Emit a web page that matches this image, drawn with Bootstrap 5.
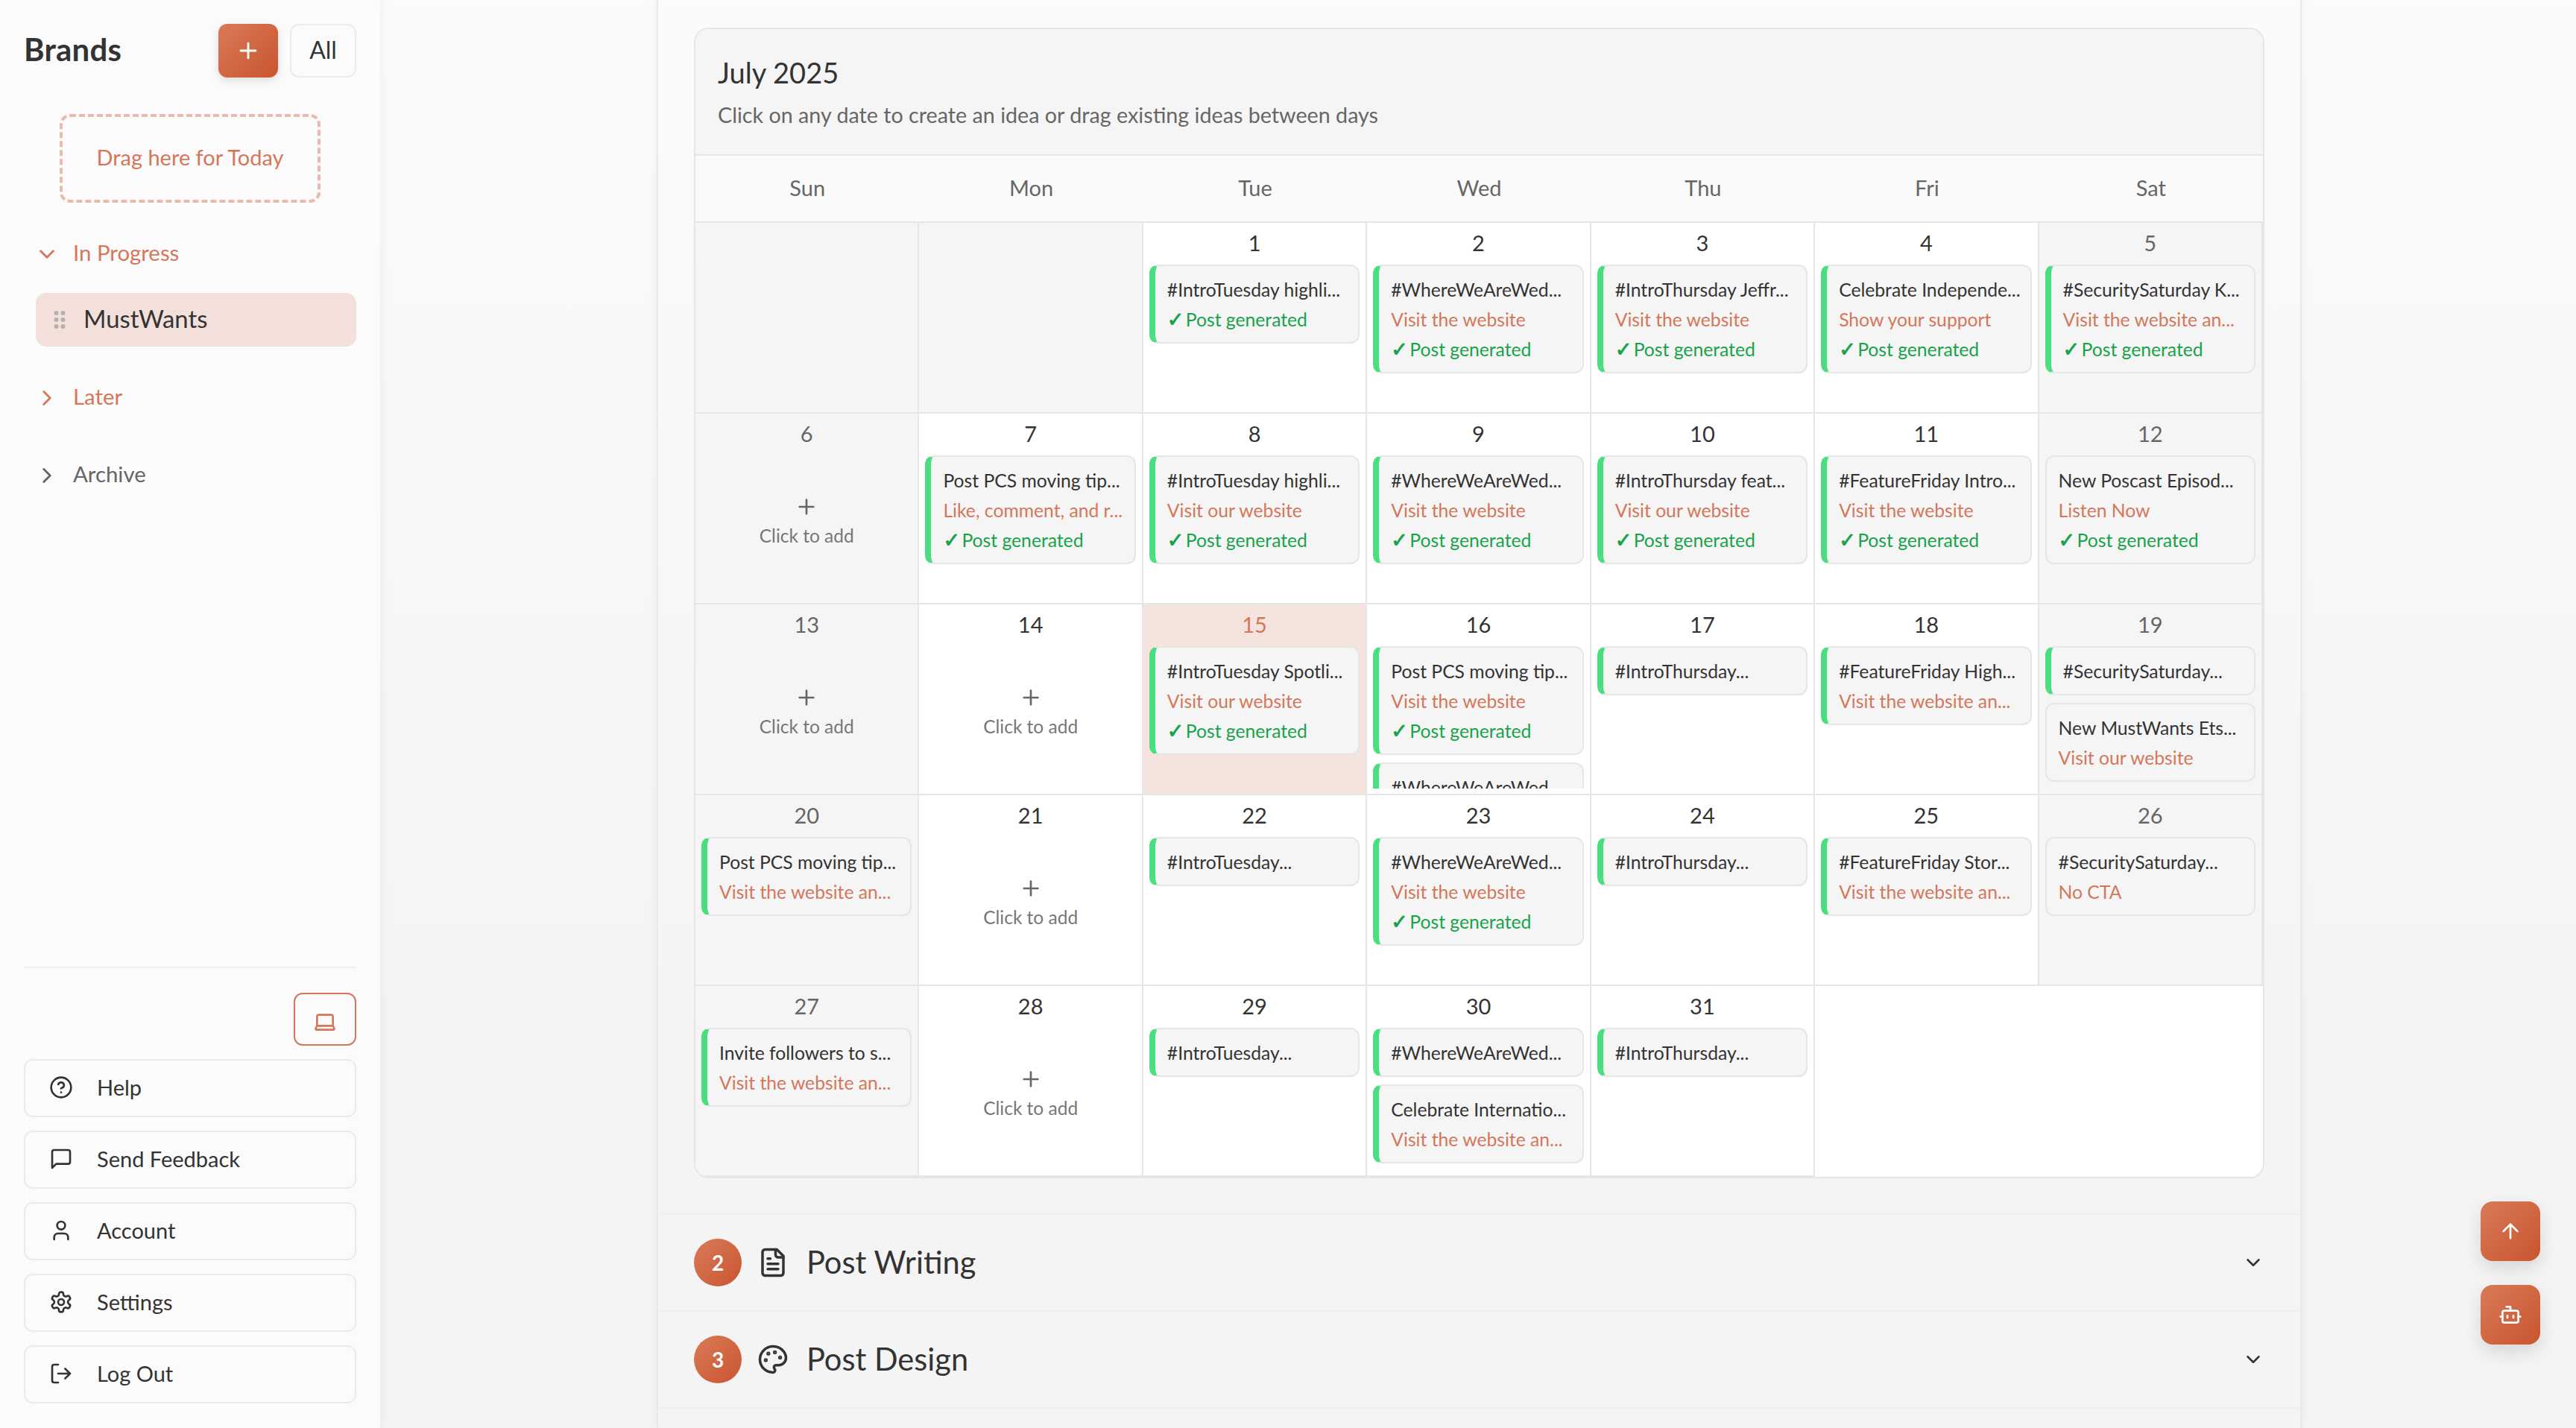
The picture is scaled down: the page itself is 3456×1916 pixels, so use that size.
<!DOCTYPE html>
<html lang="en"><head><meta charset="utf-8"><title>Calendar</title>
<link href="https://cdn.jsdelivr.net/npm/bootstrap@5.3.0/dist/css/bootstrap.min.css" rel="stylesheet">
<style>
:root{--terra:#d4775a;--line:#e6e6e6;--ink:#333}
html,body{height:100%}
body{font-family:"Lato","Liberation Sans",sans-serif;color:var(--ink);background:linear-gradient(180deg,#fbfbfb 0,#f4f4f4 75%);overflow:hidden;font-size:28px}
svg.ico{fill:none;stroke:currentColor;stroke-width:2;stroke-linecap:round;stroke-linejoin:round;flex:none}
.side-col{width:510px;flex:none;background:#fbfbfb;box-shadow:2px 0 14px rgba(0,0,0,.05);padding:32px 32px 33px;z-index:2}
.side-title{font-size:42px;font-weight:700;line-height:68px;letter-spacing:.2px;margin:0;padding-bottom:4px}
.grad-btn{background:linear-gradient(135deg,#d97a58,#c9552f);color:#fff;border:0;display:flex;align-items:center;justify-content:center;padding:0}
.add-brand{width:80px;height:72px;border-radius:12px;box-shadow:0 4px 12px rgba(0,0,0,.12)}
.all-btn{width:89px;height:72px;border:2px solid #ebebeb;border-radius:12px;font-size:32px;color:var(--ink);padding:0 0 3px;background:transparent}
.drop-zone{width:350px;height:119px;margin:49px 0 0 48px;border:4px dashed #e8bcaa;border-radius:14px;color:var(--terra);font-size:29px;padding-bottom:3px}
.grp-row{height:44px;color:var(--terra);font-size:29.4px;gap:22px;padding:0 0 4px 22px;margin-top:47px}
.grp-row svg{width:34px;height:34px;margin-left:-8px;margin-right:-4px;position:relative;top:2px}
.grp-gray{color:#666}
.brand-row{height:72px;margin:30px 0 0 16px;background:#f4e0da;border-radius:14px;font-size:32.8px;padding:0 0 3px 24px;gap:24px}
.brand-row svg{position:relative;top:1px}
.grp-later{margin-top:47px}
.grp-arch{margin-top:60px}
.side-rule{border-top:2px solid #f0f0f0;margin-bottom:33px}
.lap-btn{width:84px;height:71px;border:2px solid var(--terra);border-radius:12px;color:var(--terra);background:transparent;padding:0}
.menu-list{gap:18px;margin-top:18px}
.menu-item{height:78px;border:2px solid #ebebeb;border-radius:12px;padding:0 0 2px 32px;gap:32px;font-size:29px;color:var(--ink);background:transparent}
.main-col{min-width:0}
.panel-box{width:2207px;height:100%;margin-left:371px;border-left:2px solid #e9e9e9;border-right:2px solid #e9e9e9;box-shadow:0 0 14px rgba(0,0,0,.05);padding-top:37px}
.cal-box{width:2107px;margin:0 0 47px 48px;border:2px solid var(--line);border-radius:20px;overflow:hidden;background:#fff}
.cal-head{height:170px;background:#f5f5f5;border-bottom:2px solid var(--line);padding:30px 30px}
.cal-title{font-size:38px;font-weight:400;line-height:56px;margin:0}
.cal-sub{font-size:28.7px;color:#666;line-height:40px;margin:9px 0 0}
.cal-grid{display:grid;grid-template-columns:repeat(7,1fr)}
.dow{height:90px;background:#fafafa;border-bottom:2px solid var(--line);color:#666;font-size:29px;display:flex;align-items:center;justify-content:center;padding-bottom:2px}
.day{height:256px;overflow:hidden;border-right:2px solid var(--line);border-bottom:2px solid var(--line);padding:5px 8px 0;background:#fff}
.day-blank{grid-column:span 2;border:0}
.off{background:#f5f5f5}
.today{background:#f5e4de}
.today .day-num{color:var(--terra)}
.day-num{font-size:29px;line-height:44px;text-align:center;margin-bottom:7px}
.off .day-num{color:#666}
.day-body{height:191px;overflow:hidden}
.idea{border:2px solid var(--line);border-radius:12px;background:#f5f5f5;padding:12px 16px 10px;font-size:24.7px;line-height:40px;white-space:nowrap;overflow:hidden;margin-bottom:10px}
.idea.live{border-left:8px solid #4ade80}
.cta{color:var(--terra)}
.gen{color:#16a34a}
.tick{display:inline-block;width:25px;font-family:"DejaVu Sans",sans-serif;font-size:27px;line-height:1;-webkit-text-stroke:.9px #16a34a}
.add-slot{color:#777;font-size:24.5px;line-height:40px;padding-top:53px}
.add-slot svg{width:32px;height:32px;color:#666;margin-bottom:3px}
.step-row{height:130px;border-top:2px solid #efefef;padding:0 48px;gap:24px}
.step-num{width:64px;height:64px;border-radius:50%;font-size:28px;font-weight:700}
.step-title{font-size:41.6px;margin-left:3px;padding-bottom:1px}
.step-row .ico-big{width:42px;height:42px;margin:0 -3px}
.float-stack{position:fixed;right:48px;bottom:112px;gap:32px;z-index:3}
.fab{width:80px;height:80px;border-radius:16px;box-shadow:0 10px 24px rgba(0,0,0,.12)}
</style></head>
<body>
<div class="d-flex h-100">
<aside class="side-col d-flex flex-column">
  <div class="d-flex align-items-center">
    <h2 class="side-title flex-grow-1">Brands</h2>
    <button class="grad-btn add-brand" aria-label="Add"><svg class="ico" width="34" height="34" viewBox="0 0 24 24"><path d="M5 12h14M12 5v14"/></svg></button>
    <button class="all-btn ms-3">All</button>
  </div>
  <div class="drop-zone d-flex align-items-center justify-content-center">Drag here for Today</div>
  <div class="grp-row d-flex align-items-center"><svg class="ico" viewBox="0 0 24 24"><path d="m6 9 6 6 6-6"/></svg>In Progress</div>
  <div class="brand-row d-flex align-items-center"><svg width="16" height="26" viewBox="0 0 16 26" fill="#b5b0ae"><circle cx="3.5" cy="4" r="3"/><circle cx="12.5" cy="4" r="3"/><circle cx="3.5" cy="13" r="3"/><circle cx="12.5" cy="13" r="3"/><circle cx="3.5" cy="22" r="3"/><circle cx="12.5" cy="22" r="3"/></svg>MustWants</div>
  <div class="grp-row grp-later d-flex align-items-center"><svg class="ico" viewBox="0 0 24 24"><path d="m9 18 6-6-6-6"/></svg>Later</div>
  <div class="grp-row grp-gray grp-arch d-flex align-items-center"><svg class="ico" viewBox="0 0 24 24"><path d="m9 18 6-6-6-6"/></svg>Archive</div>
  <div class="mt-auto">
    <div class="side-rule"></div>
    <div class="d-flex justify-content-end"><button class="lap-btn" aria-label="Laptop"><svg class="ico" width="32" height="32" viewBox="0 0 24 24"><path d="M20 16V7a2 2 0 0 0-2-2H6a2 2 0 0 0-2 2v9m16 0H4m16 0 1.28 2.55a1 1 0 0 1-.9 1.45H3.62a1 1 0 0 1-.9-1.45L4 16"/></svg></button></div>
    <div class="menu-list d-flex flex-column">
      <div class="menu-item d-flex align-items-center"><svg class="ico" width="32" height="32" viewBox="0 0 24 24"><circle cx="12" cy="12" r="10"/><path d="M9.09 9a3 3 0 0 1 5.83 1c0 2-3 3-3 3M12 17h.01"/></svg>Help</div>
      <div class="menu-item d-flex align-items-center"><svg class="ico" width="32" height="32" viewBox="0 0 24 24"><path d="M21 15a2 2 0 0 1-2 2H7l-4 4V5a2 2 0 0 1 2-2h14a2 2 0 0 1 2 2z"/></svg>Send Feedback</div>
      <div class="menu-item d-flex align-items-center"><svg class="ico" width="32" height="32" viewBox="0 0 24 24"><path d="M19 21v-2a4 4 0 0 0-4-4H9a4 4 0 0 0-4 4v2"/><circle cx="12" cy="7" r="4"/></svg>Account</div>
      <div class="menu-item d-flex align-items-center"><svg class="ico" width="32" height="32" viewBox="0 0 24 24"><path d="M12.22 2h-.44a2 2 0 0 0-2 2v.18a2 2 0 0 1-1 1.73l-.43.25a2 2 0 0 1-2 0l-.15-.08a2 2 0 0 0-2.73.73l-.22.38a2 2 0 0 0 .73 2.73l.15.1a2 2 0 0 1 1 1.72v.51a2 2 0 0 1-1 1.74l-.15.09a2 2 0 0 0-.73 2.73l.22.38a2 2 0 0 0 2.73.73l.15-.08a2 2 0 0 1 2 0l.43.25a2 2 0 0 1 1 1.73V20a2 2 0 0 0 2 2h.44a2 2 0 0 0 2-2v-.18a2 2 0 0 1 1-1.73l.43-.25a2 2 0 0 1 2 0l.15.08a2 2 0 0 0 2.73-.73l.22-.39a2 2 0 0 0-.73-2.73l-.15-.08a2 2 0 0 1-1-1.74v-.5a2 2 0 0 1 1-1.74l.15-.09a2 2 0 0 0 .73-2.73l-.22-.38a2 2 0 0 0-2.73-.73l-.15.08a2 2 0 0 1-2 0l-.43-.25a2 2 0 0 1-1-1.73V4a2 2 0 0 0-2-2z"/><circle cx="12" cy="12" r="3"/></svg>Settings</div>
      <div class="menu-item d-flex align-items-center"><svg class="ico" width="32" height="32" viewBox="0 0 24 24"><path d="M9 21H5a2 2 0 0 1-2-2V5a2 2 0 0 1 2-2h4M16 17l5-5-5-5M21 12H9"/></svg>Log Out</div>
    </div>
  </div>
</aside>
<main class="main-col flex-grow-1">
<div class="panel-box">
  <section class="cal-box">
    <header class="cal-head"><h3 class="cal-title">July 2025</h3><p class="cal-sub">Click on any date to create an idea or drag existing ideas between days</p></header>
    <div class="cal-grid">
      <div class="dow">Sun</div><div class="dow">Mon</div><div class="dow">Tue</div><div class="dow">Wed</div><div class="dow">Thu</div><div class="dow">Fri</div><div class="dow">Sat</div>
    </div>
    <div class="cal-grid">
      <div class="day off"></div>
      <div class="day off"></div>
      <div class="day"><div class="day-num">1</div><div class="day-body"><div class="idea live">#IntroTuesday highli...<br><span class="gen"><span class="tick">✓</span>Post generated</span></div></div></div>
      <div class="day"><div class="day-num">2</div><div class="day-body"><div class="idea live">#WhereWeAreWed...<br><span class="cta">Visit the website</span><br><span class="gen"><span class="tick">✓</span>Post generated</span></div></div></div>
      <div class="day"><div class="day-num">3</div><div class="day-body"><div class="idea live">#IntroThursday Jeffr...<br><span class="cta">Visit the website</span><br><span class="gen"><span class="tick">✓</span>Post generated</span></div></div></div>
      <div class="day"><div class="day-num">4</div><div class="day-body"><div class="idea live">Celebrate Independe...<br><span class="cta">Show your support</span><br><span class="gen"><span class="tick">✓</span>Post generated</span></div></div></div>
      <div class="day off"><div class="day-num">5</div><div class="day-body"><div class="idea live">#SecuritySaturday K...<br><span class="cta">Visit the website an...</span><br><span class="gen"><span class="tick">✓</span>Post generated</span></div></div></div>

      <div class="day off"><div class="day-num">6</div><div class="add-slot d-flex flex-column align-items-center"><svg class="ico" viewBox="0 0 24 24"><path d="M5 12h14M12 5v14"/></svg>Click to add</div></div>
      <div class="day"><div class="day-num">7</div><div class="day-body"><div class="idea live">Post PCS moving tip...<br><span class="cta">Like, comment, and r...</span><br><span class="gen"><span class="tick">✓</span>Post generated</span></div></div></div>
      <div class="day"><div class="day-num">8</div><div class="day-body"><div class="idea live">#IntroTuesday highli...<br><span class="cta">Visit our website</span><br><span class="gen"><span class="tick">✓</span>Post generated</span></div></div></div>
      <div class="day"><div class="day-num">9</div><div class="day-body"><div class="idea live">#WhereWeAreWed...<br><span class="cta">Visit the website</span><br><span class="gen"><span class="tick">✓</span>Post generated</span></div></div></div>
      <div class="day"><div class="day-num">10</div><div class="day-body"><div class="idea live">#IntroThursday feat...<br><span class="cta">Visit our website</span><br><span class="gen"><span class="tick">✓</span>Post generated</span></div></div></div>
      <div class="day"><div class="day-num">11</div><div class="day-body"><div class="idea live">#FeatureFriday Intro...<br><span class="cta">Visit the website</span><br><span class="gen"><span class="tick">✓</span>Post generated</span></div></div></div>
      <div class="day off"><div class="day-num">12</div><div class="day-body"><div class="idea">New Poscast Episod...<br><span class="cta">Listen Now</span><br><span class="gen"><span class="tick">✓</span>Post generated</span></div></div></div>

      <div class="day off"><div class="day-num">13</div><div class="add-slot d-flex flex-column align-items-center"><svg class="ico" viewBox="0 0 24 24"><path d="M5 12h14M12 5v14"/></svg>Click to add</div></div>
      <div class="day"><div class="day-num">14</div><div class="add-slot d-flex flex-column align-items-center"><svg class="ico" viewBox="0 0 24 24"><path d="M5 12h14M12 5v14"/></svg>Click to add</div></div>
      <div class="day today"><div class="day-num">15</div><div class="day-body"><div class="idea live">#IntroTuesday Spotli...<br><span class="cta">Visit our website</span><br><span class="gen"><span class="tick">✓</span>Post generated</span></div></div></div>
      <div class="day"><div class="day-num">16</div><div class="day-body"><div class="idea live">Post PCS moving tip...<br><span class="cta">Visit the website</span><br><span class="gen"><span class="tick">✓</span>Post generated</span></div><div class="idea live">#WhereWeAreWed...</div></div></div>
      <div class="day"><div class="day-num">17</div><div class="day-body"><div class="idea live">#IntroThursday...</div></div></div>
      <div class="day"><div class="day-num">18</div><div class="day-body"><div class="idea live">#FeatureFriday High...<br><span class="cta">Visit the website an...</span></div></div></div>
      <div class="day off"><div class="day-num">19</div><div class="day-body"><div class="idea live">#SecuritySaturday...</div><div class="idea">New MustWants Ets...<br><span class="cta">Visit our website</span></div></div></div>

      <div class="day off"><div class="day-num">20</div><div class="day-body"><div class="idea live">Post PCS moving tip...<br><span class="cta">Visit the website an...</span></div></div></div>
      <div class="day"><div class="day-num">21</div><div class="add-slot d-flex flex-column align-items-center"><svg class="ico" viewBox="0 0 24 24"><path d="M5 12h14M12 5v14"/></svg>Click to add</div></div>
      <div class="day"><div class="day-num">22</div><div class="day-body"><div class="idea live">#IntroTuesday...</div></div></div>
      <div class="day"><div class="day-num">23</div><div class="day-body"><div class="idea live">#WhereWeAreWed...<br><span class="cta">Visit the website</span><br><span class="gen"><span class="tick">✓</span>Post generated</span></div></div></div>
      <div class="day"><div class="day-num">24</div><div class="day-body"><div class="idea live">#IntroThursday...</div></div></div>
      <div class="day"><div class="day-num">25</div><div class="day-body"><div class="idea live">#FeatureFriday Stor...<br><span class="cta">Visit the website an...</span></div></div></div>
      <div class="day off"><div class="day-num">26</div><div class="day-body"><div class="idea">#SecuritySaturday...<br><span class="cta">No CTA</span></div></div></div>

      <div class="day off"><div class="day-num">27</div><div class="day-body"><div class="idea live">Invite followers to s...<br><span class="cta">Visit the website an...</span></div></div></div>
      <div class="day"><div class="day-num">28</div><div class="add-slot d-flex flex-column align-items-center"><svg class="ico" viewBox="0 0 24 24"><path d="M5 12h14M12 5v14"/></svg>Click to add</div></div>
      <div class="day"><div class="day-num">29</div><div class="day-body"><div class="idea live">#IntroTuesday...</div></div></div>
      <div class="day"><div class="day-num">30</div><div class="day-body"><div class="idea live">#WhereWeAreWed...</div><div class="idea live">Celebrate Internatio...<br><span class="cta">Visit the website an...</span></div></div></div>
      <div class="day"><div class="day-num">31</div><div class="day-body"><div class="idea live">#IntroThursday...</div></div></div>
      <div class="day day-blank"></div>
    </div>
  </section>
  <div class="step-row d-flex align-items-center"><span class="grad-btn step-num">2</span><svg class="ico ico-big" viewBox="0 0 24 24"><path d="M15 2H6a2 2 0 0 0-2 2v16a2 2 0 0 0 2 2h12a2 2 0 0 0 2-2V7Z"/><path d="M14 2v4a2 2 0 0 0 2 2h4M10 9H8M16 13H8M16 17H8"/></svg><span class="step-title flex-grow-1">Post Writing</span><svg class="ico" width="30" height="30" viewBox="0 0 24 24"><path d="m6 9 6 6 6-6"/></svg></div>
  <div class="step-row d-flex align-items-center"><span class="grad-btn step-num">3</span><svg class="ico ico-big" viewBox="0 0 24 24"><circle cx="13.5" cy="6.5" r=".5" fill="currentColor"/><circle cx="17.5" cy="10.5" r=".5" fill="currentColor"/><circle cx="8.5" cy="7.5" r=".5" fill="currentColor"/><circle cx="6.5" cy="12.5" r=".5" fill="currentColor"/><path d="M12 2C6.5 2 2 6.5 2 12s4.5 10 10 10c.926 0 1.648-.746 1.648-1.688 0-.437-.18-.835-.437-1.125-.29-.289-.438-.652-.438-1.125a1.64 1.64 0 0 1 1.668-1.668h1.996c3.051 0 5.555-2.503 5.555-5.554C21.965 6.012 17.461 2 12 2z"/></svg><span class="step-title flex-grow-1">Post Design</span><svg class="ico" width="30" height="30" viewBox="0 0 24 24"><path d="m6 9 6 6 6-6"/></svg></div>
  <div class="step-row"></div>
</div>
</main>
</div>
<div class="float-stack d-flex flex-column">
  <button class="grad-btn fab" aria-label="Top"><svg class="ico" width="32" height="32" viewBox="0 0 24 24"><path d="m5 12 7-7 7 7M12 19V5"/></svg></button>
  <button class="grad-btn fab" aria-label="Assistant"><svg class="ico" width="32" height="32" viewBox="0 0 24 24"><path d="M12 8V4H8"/><rect x="4" y="8" width="16" height="12" rx="2"/><path d="M2 14h2M20 14h2M15 13v2M9 13v2"/></svg></button>
</div>
<script src="https://cdn.jsdelivr.net/npm/bootstrap@5.3.0/dist/js/bootstrap.bundle.min.js"></script>
</body></html>
